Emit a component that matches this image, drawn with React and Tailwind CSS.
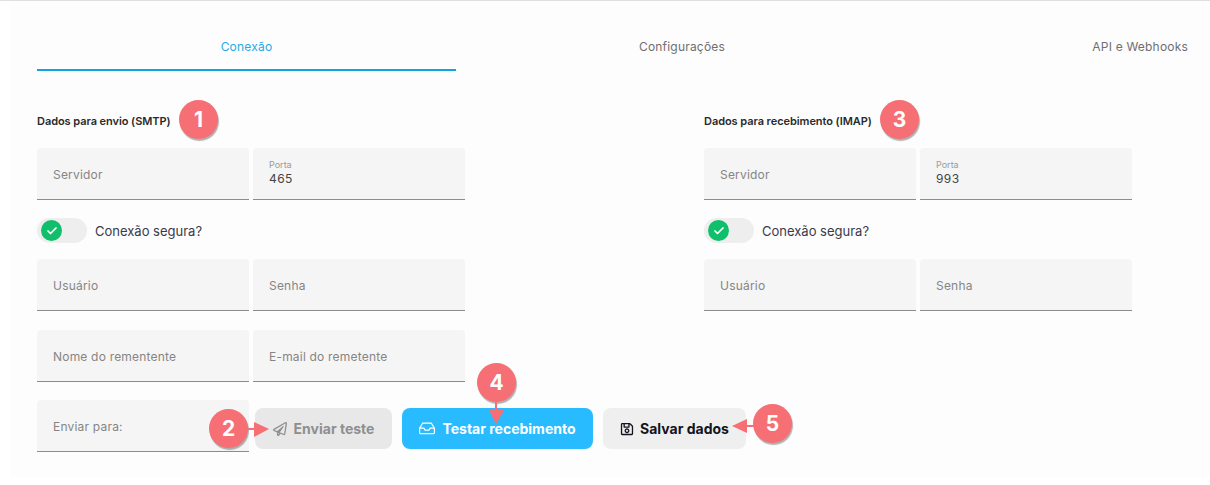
import React from "react";
import { Check } from "lucide-react";
import { FaRegPaperPlane, FaRegSave } from "react-icons/fa";

const Field = ({ label, value }) => (
  <div className="h-[52px] w-[212px] shrink-0 rounded-t-[4px] border-b border-[#8c8c8c] bg-[#f5f5f5] px-4">
    {value ? (
      <div className="pt-[11px]">
        <p className="text-[9px] leading-[12px] text-[#9a9a9a]">{label}</p>
        <p className="text-[12px] leading-[15px] tracking-[0.4px] text-[#444]">
          {value}
        </p>
      </div>
    ) : (
      <p className="pt-[19px] text-[12px] leading-[16px] tracking-[0.2px] text-[#858585]">
        {label}
      </p>
    )}
  </div>
);

const SecureToggle = () => (
  <div className="flex h-[25px] items-center">
    <div className="flex h-[25px] w-[50px] items-center rounded-full bg-[#eeeeee] pl-1">
      <span className="flex h-[21px] w-[21px] items-center justify-center rounded-full bg-[#0fbf6b]">
        <Check className="h-3 w-3 text-white" strokeWidth={3.5} />
      </span>
    </div>
    <span className="ml-2 pt-[2px] text-[13px] text-[#3a3a4a]">
      Conexão segura?
    </span>
  </div>
);

const Marker = ({ n, className }) => (
  <span
    className={`absolute flex h-[39px] w-[39px] items-center justify-center rounded-full bg-[#f56f75] text-[21px] font-bold text-white shadow-[1px_2px_1px_rgba(0,0,0,0.3)] ${className}`}
  >
    {n}
  </span>
);

const InboxIcon = () => (
  <svg
    width="16"
    height="13"
    viewBox="0 0 16 13"
    fill="none"
    stroke="currentColor"
    strokeWidth="1.2"
    strokeLinejoin="round"
  >
    <path d="M3.6 1.2h8.8l3 5v4.3a1.2 1.2 0 0 1-1.2 1.2H1.8a1.2 1.2 0 0 1-1.2-1.2V6.2z" />
    <path d="M.6 6.2H5l1 2h4l1-2h4.4" />
  </svg>
);

const App = () => {
  return (
    <div
      className="h-[485px] w-[1210px] overflow-hidden bg-white"
      style={{ fontFamily: "Inter, sans-serif" }}
    >
      <div className="h-px bg-[#e0e0e0]" />
      <div className="relative ml-[11px] h-[476px] bg-[#fdfdfd] pl-[26px]">
        {/* tabs */}
        <div className="flex h-[70px] text-[12px] tracking-[0.2px]">
          <div className="flex w-[419px] items-center justify-center border-b-2 border-[#0ea5e0] pt-[24px] text-[#29a9e6]">
            Conexão
          </div>
          <div className="flex w-[452px] items-center justify-center pt-[22px] text-[#6f6f6f]">
            Configurações
          </div>
          <div className="flex flex-1 items-center justify-end pt-[22px] pr-[22px] text-[#6f6f6f]">
            API e Webhooks
          </div>
        </div>

        <div className="flex pt-[31px]">
          <div className="w-[667px]">
            <h3 className="h-[46px] pt-[11px] text-[11px] leading-[16px] font-semibold tracking-[-0.06px] text-[#2a2a2a]">
              Dados para envio (SMTP)
            </h3>
            <div className="flex gap-1">
              <Field label="Servidor" />
              <Field label="Porta" value="465" />
            </div>
            <div className="pt-[18px] pb-4">
              <SecureToggle />
            </div>
            <div className="flex gap-1">
              <Field label="Usuário" />
              <Field label="Senha" />
            </div>
            <div className="mt-[19px] flex gap-1">
              <Field label="Nome do rementente" />
              <Field label="E-mail do remetente" />
            </div>
            <div className="mt-[18px] flex items-start">
              <Field label="Enviar para:" />
              <div className="mt-2 ml-[6px] flex shrink-0 gap-[10px]">
                <button className="flex h-[41px] w-[137px] items-center justify-center gap-[7px] rounded-[8px] bg-[#e8e8e8] text-[14px] font-bold text-[#8f8f8f]">
                  <FaRegPaperPlane className="h-[14px] w-[14px]" />
                  Enviar teste
                </button>
                <button className="flex h-[41px] w-[191px] items-center justify-center gap-[7px] rounded-[8px] bg-[#29bbff] text-[14px] font-bold text-white">
                  <InboxIcon />
                  Testar recebimento
                </button>
                <button className="flex h-[41px] w-[143px] items-center justify-center gap-[6px] rounded-[8px] bg-[#efefef] text-[14px] font-bold text-[#14141e]">
                  <FaRegSave className="h-[14px] w-[14px]" />
                  Salvar dados
                </button>
              </div>
            </div>
          </div>

          <div>
            <h3 className="h-[46px] pt-[11px] text-[11px] leading-[16px] font-semibold tracking-[-0.06px] text-[#2a2a2a]">
              Dados para recebimento (IMAP)
            </h3>
            <div className="flex gap-1">
              <Field label="Servidor" />
              <Field label="Porta" value="993" />
            </div>
            <div className="pt-[18px] pb-4">
              <SecureToggle />
            </div>
            <div className="flex gap-1">
              <Field label="Usuário" />
              <Field label="Senha" />
            </div>
          </div>
        </div>

        {/* numbered callouts */}
        <Marker n="1" className="top-[99px] left-[168px]" />
        <Marker n="3" className="top-[99px] left-[869px]" />
        <Marker n="2" className="top-[408px] left-[198px]" />
        <Marker n="4" className="top-[362px] left-[466px]" />
        <Marker n="5" className="top-[403px] left-[742px]" />

        <svg
          className="pointer-events-none absolute top-0 left-0"
          width="1199"
          height="476"
          fill="#f56f75"
        >
          <rect x="235" y="427" width="10" height="2" />
          <path d="M243 421 L258 428 L243 436 Z" />
          <rect x="484" y="398" width="2" height="14" />
          <path d="M478 409 L493 409 L485 423 Z" />
          <rect x="734" y="424" width="12" height="2" />
          <path d="M721 425 L736 418 L736 432 Z" />
        </svg>
      </div>
    </div>
  );
};

export default App;
